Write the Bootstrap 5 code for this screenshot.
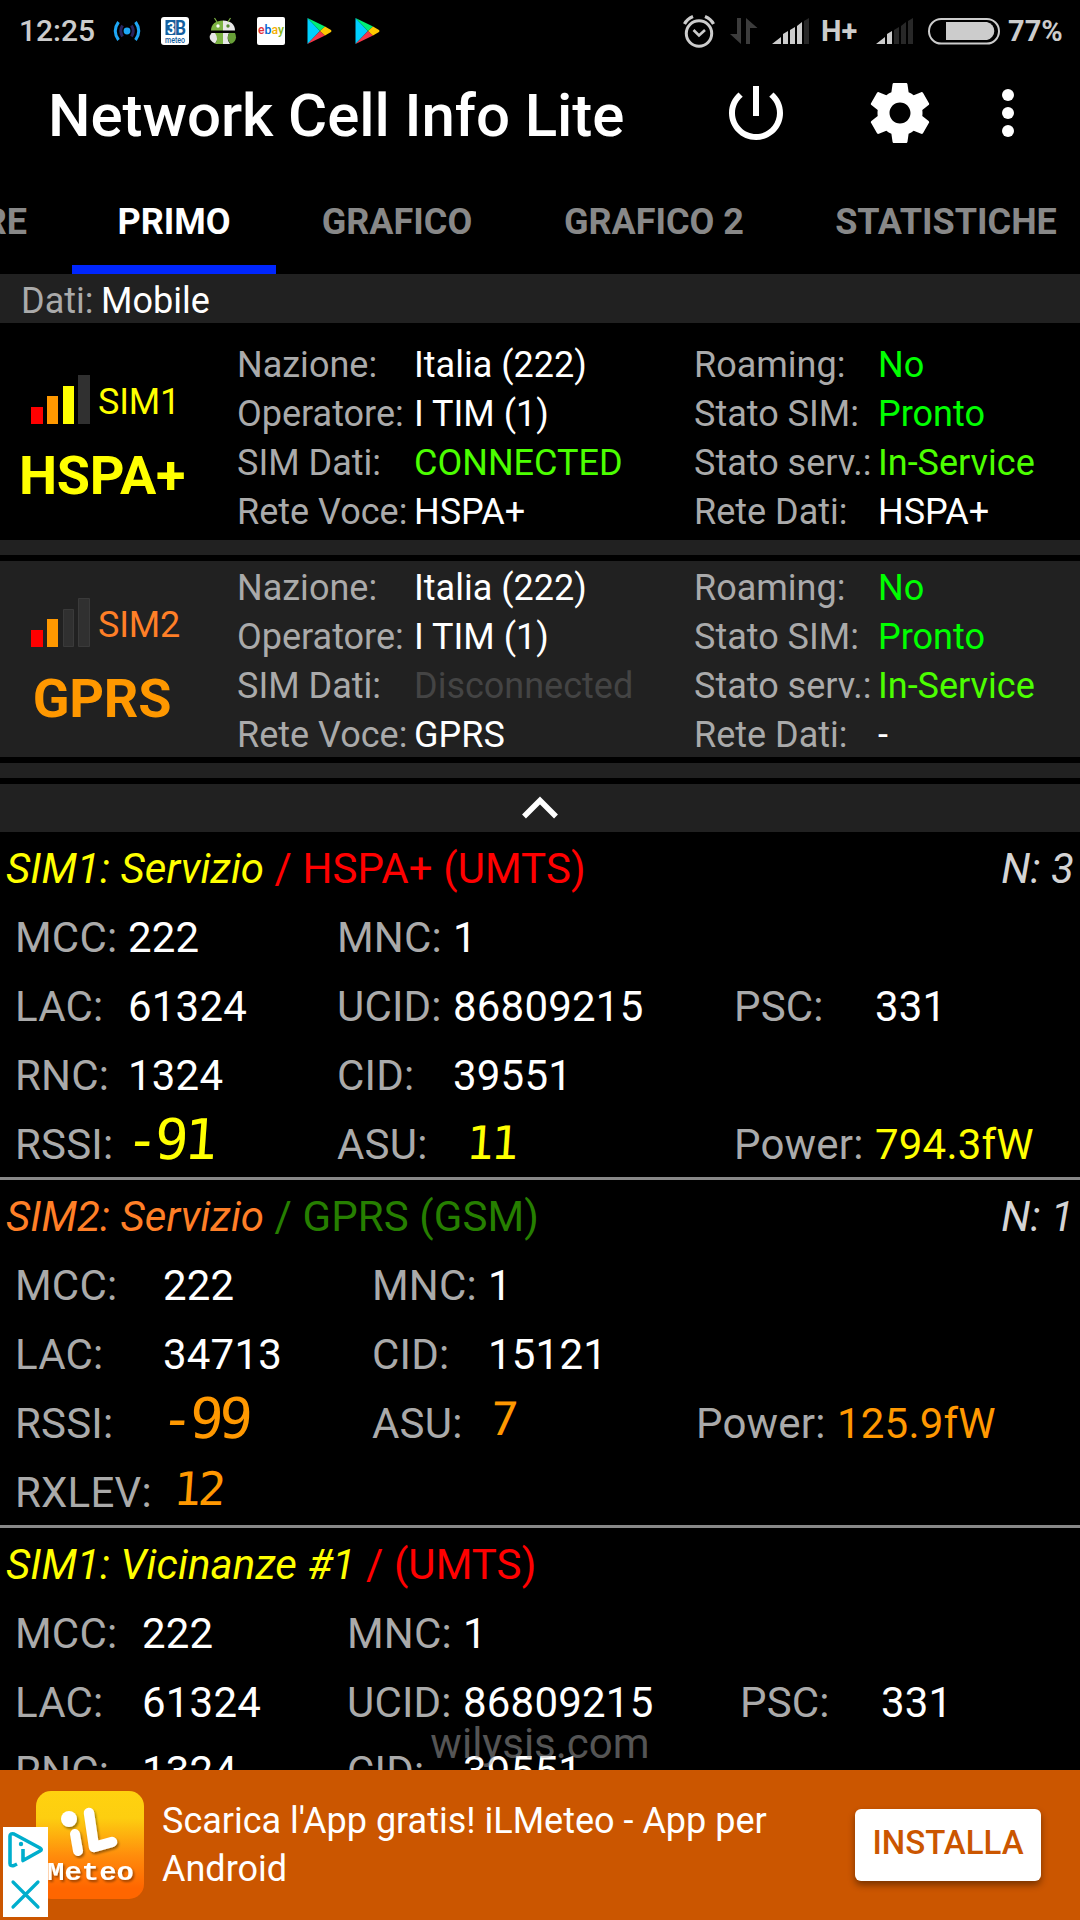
<!DOCTYPE html>
<html lang="it" data-bs-theme="dark">
<head>
<meta charset="utf-8">
<meta name="viewport" content="width=device-width, initial-scale=1">
<title>Network Cell Info Lite</title>
<link rel="stylesheet" href="https://cdn.jsdelivr.net/npm/bootstrap@5.3.0/dist/css/bootstrap.min.css">
<style>
  body { font-family: Roboto, "Liberation Sans", sans-serif; background: #000; color: #fff; margin: 0; }
  svg { display: block; flex: none; }
  .screen { width: 1080px; height: 1920px; overflow: hidden; background: #000; }
  /* status bar */
  .status { height: 61px; font-weight: 500; font-size: 30px; color: #ccc; line-height: 36px; }
  .status-left { display: grid; grid-template-columns: 94px repeat(6, 48px); padding-left: 19px; align-items: center; }
  .status-right { display: grid; grid-template-columns: 47px 42px 49px 55px 52px 80px 72px; align-items: center; }
  .strong-txt { font-weight: 700; font-size: 29px; }
  /* app bar */
  .appbar { height: 103px; padding-left: 48px; }
  .apptitle { font-size: 60px; font-weight: 500; line-height: 70px; width: 672px; padding-top: 20px; white-space: nowrap; letter-spacing: -.07px; }
  .gap-gear { margin-left: 72px; }
  .gap-dots { margin-left: 36px; }
  /* tabs */
  .tabbar { height: 110px; font-size: 36px; font-weight: 700; }
  .tabbar .tab-item { height: 110px; line-height: 42px; padding-top: 37px; text-align: center; white-space: nowrap; flex: none; color: #888; border-bottom: 9px solid transparent; }
  .tabbar .tab-item.on { color: #fff; border-bottom-color: #0026ff; }
  .t0 { width: 72px; padding-right: 45px; direction: rtl; }
  .t1 { width: 204px; } .t2 { width: 242px; } .t3 { width: 272px; } .t4 { width: 312px; }
  /* summary panels */
  .shade { background: #212121; }
  .ln { height: 49px; padding-top: 5px; line-height: 44.500px; font-size: 36px; white-space: nowrap; }
  .lbl { color: #aaa; }
  .sim-panel { display: grid; grid-template-columns: 237px 177px 280px 184px 1fr; }
  .sim-side { grid-row: 1 / span 4; grid-column: 1; padding-top: 37px; }
  .sim-name { font-size: 36px; line-height: 42px; padding-top: 6px; margin-left: 7px; letter-spacing: -.2px; }
  .net-name { font-size: 54px; font-weight: 700; line-height: 60px; width: 204px; text-align: center; margin-top: 21px; letter-spacing: -.3px; }
  .strip { height: 15px; }
  .chev { height: 48px; margin-top: 6px; }
  .yel { color: #ff0; } .ora { color: #ff9800; } .cor { color: #ff7f27; }
  .grn { color: #0f0; } .lime { color: #4cff00; } .dgrn { color: #267f00; } .rd { color: #f00; } .dim { color: #444; } .pale { color: #d4d4d4; }
  /* cell sections */
  .cellbox { font-size: 42px; border-bottom: 3px solid #888; }
  .cellbox > div { height: 69px; padding-top: 4px; line-height: 65px; white-space: nowrap; }
  .cellbox > .cell-head { padding-left: 6px; padding-right: 6px; white-space: pre; letter-spacing: .08px; }
  .kv { display: grid; padding-left: 15px; letter-spacing: .2px; }
  .k1 .kv { grid-template-columns: 113px 209px 116px 281px 141px 1fr; }
  .k2 .kv { grid-template-columns: 148px 209px 116px 208px 141px 1fr; }
  .k3 .kv { grid-template-columns: 127px 205px 116px 277px 141px 1fr; }
  .lcd { font-family: "DejaVu Sans Mono", monospace; transform: skewX(-4deg); transform-origin: 0 100%; }
  .lcd-lg { font-size: 56px; letter-spacing: -4.500px; margin-left: -5px; margin-top: -5px; }
  .lcd-sm { font-size: 46px; letter-spacing: -2px; margin-top: -1px; }
  .lcd-asu { padding-left: 11px; letter-spacing: -3px; }
  .lcd-up { margin-top: -4px; }
  .lcd-rx { padding-left: 8px; letter-spacing: -3px; margin-top: -3px; }
  .cells { height: 938px; overflow: hidden; position: relative; }
  .watermark { position: absolute; left: 0; right: 0; top: 887px; text-align: center; font-size: 42px; line-height: 50px; color: rgba(170,170,170,.5); }
  /* ad */
  .adbar { height: 150px; background: #cb5600; position: relative; padding-left: 36px; }
  .adtext { font-size: 36px; line-height: 48px; width: 693px; padding: 27px 0 0 18px; height: 150px; }
  .install, .install:hover { width: 186px; height: 72px; background: #fff; color: #cb5600; font-size: 33px; font-weight: 500; border-radius: 6px; line-height: 64px; text-align: center; box-shadow: 0 4px 7px rgba(0,0,0,.4); margin-left: 18px; margin-top: 39px; padding: 0 0 4px; border: 0; }
  .adicon { margin-top: 21px; }
  .adchoice { position: absolute; left: 3px; top: 57px; width: 45px; height: 90px; background: #fff; }
</style>
<script src="https://cdn.jsdelivr.net/npm/bootstrap@5.3.0/dist/js/bootstrap.bundle.min.js"></script>
</head>
<body>
<div class="screen d-flex flex-column">
  <header class="status d-flex justify-content-between">
    <div class="status-left">
      <span>12:25</span>
      <svg width="28" height="28" viewBox="0 0 28 28" fill="none" stroke-width="3"><circle cx="14" cy="14" r="3.4" fill="#1ea7f5"/><g stroke="#29235c"><path d="M9.500 8.500q-3.500 5.500 0 11M18.500 8.500q3.500 5.500 0 11"/></g><g stroke="#1ea7f5"><path d="M5.500 5q-6.500 9 0 18M22.500 5q6.500 9 0 18"/></g></svg>
      <svg width="28" height="28" viewBox="0 0 28 28"><rect width="28" height="28" rx="3" fill="#fff"/><rect x="4.500" y="3" width="10" height="15" fill="#1560a0"/><text x="6" y="16.500" font-size="16" font-weight="700" fill="#fff" textLength="8" lengthAdjust="spacingAndGlyphs">3</text><text x="14" y="17.500" font-size="20" font-weight="700" fill="#1560a0" textLength="11" lengthAdjust="spacingAndGlyphs">B</text><text x="4" y="26" font-size="9" font-weight="500" fill="#1560a0" textLength="20" lengthAdjust="spacingAndGlyphs">meteo</text></svg>
      <svg width="28" height="28" viewBox="0 0 28 28"><path d="M2 13.500C2 7 7 3.500 14 3.500V13.500z" fill="#7cb342"/><path d="M14 3.500c7 0 12 3.500 12 10H14z" fill="#e8e8e8"/><path d="M8 5L5.500 1M19 5l2.500-4" stroke="#7cb342" stroke-width="1.200"/><circle cx="9" cy="9" r="1.700" fill="#fff"/><circle cx="19" cy="9" r="1.700" fill="#558b2f"/><path d="M2.500 16H10q-1 7-4 10.500Q0 24 .7 19z" fill="#e8e8e8"/><path d="M6 16h8v11H6q4-5 0-11z" fill="#7cb342"/><path d="M14 16h6q-3 6 1 11h-7z" fill="#e8e8e8"/><path d="M20 16h6q3 7-3 10.500h-2q-4-5-1-10.500z" fill="#689f38"/></svg>
      <svg width="28" height="28" viewBox="0 0 28 28"><rect width="28" height="28" rx="2" fill="#fff"/><text x="1" y="17" font-size="13" font-weight="500" textLength="26" lengthAdjust="spacingAndGlyphs"><tspan fill="#e53238">e</tspan><tspan fill="#0064d2">b</tspan><tspan fill="#f5af02">a</tspan><tspan fill="#86b817">y</tspan></text></svg>
      <svg width="28" height="28" viewBox="0 0 28 28"><path d="M2.500 1v26L15 14z" fill="#00d0ff"/><path d="M2.500 1L20 9.500 15 14z" fill="#00f076"/><path d="M2.500 27L20 18.500 15 14z" fill="#f5384a"/><path d="M20 9.500l6 3.500q1 1 0 2l-6 3.500-5-4.500z" fill="#ffc900"/></svg>
      <svg width="28" height="28" viewBox="0 0 28 28"><path d="M2.500 1v26L15 14z" fill="#00d0ff"/><path d="M2.500 1L20 9.500 15 14z" fill="#00f076"/><path d="M2.500 27L20 18.500 15 14z" fill="#f5384a"/><path d="M20 9.500l6 3.500q1 1 0 2l-6 3.500-5-4.500z" fill="#ffc900"/></svg>
    </div>
    <div class="status-right">
      <svg width="32" height="34" viewBox="0 0 32 34" fill="none" stroke="#ccc"><circle cx="16" cy="19.500" r="12.700" stroke-width="3"/><path d="M10.500 16l5.500 5.500 6-5.500" stroke-width="2.600"/><path d="M1.500 10Q4 5 10 2.500M30.500 10Q28 5 22 2.500" stroke-width="3.200"/></svg>
      <svg width="28" height="28" viewBox="0 0 28 28" fill="#3c3c3c"><path d="M7 1h4v26L0 17h7zM16 27h4V11h7.500L16 1z"/></svg>
      <svg width="38" height="28" viewBox="0 0 38 28" fill="#ccc"><path d="M0 27l9-7v7zM11 17l5-3v13h-5zM18 13l5-3v17h-5zM25 9l5-4v22h-5z"/><path d="M32 4l5-3v26h-5z" fill="#282828"/></svg>
      <span class="strong-txt">H+</span>
      <svg width="38" height="28" viewBox="0 0 38 28" fill="#ccc"><path d="M0 27l9-7v7zM11 17l5-3v13h-5z"/><path d="M18 13l5-3v17h-5zM25 9l5-4v22h-5zM32 4l5-3v26h-5z" fill="#282828"/></svg>
      <svg width="74" height="28" viewBox="0 0 74 28"><rect x="1" y="2" width="70" height="24.500" rx="12.200" fill="none" stroke="#ccc" stroke-width="2"/><path d="M18 5h41a9.200 9.200 0 0 1 0 18H18z" fill="#ccc"/></svg>
      <span class="strong-txt">77%</span>
    </div>
  </header>

  <nav class="appbar d-flex align-items-start" aria-label="App">
    <div class="apptitle">Network Cell Info Lite</div>
    <svg class="mt-3" width="72" height="72" viewBox="0 0 24 24" fill="#fff"><path d="M13 3h-2v10h2V3zm4.830 2.170l-1.420 1.420C17.990 7.860 19 9.810 19 12c0 3.870-3.130 7-7 7s-7-3.130-7-7c0-2.190 1.010-4.140 2.580-5.420L6.170 5.170C4.230 6.820 3 9.260 3 12c0 4.970 4.030 9 9 9s9-4.030 9-9c0-2.740-1.230-5.180-3.170-6.830z"/></svg>
    <svg class="mt-3 gap-gear" width="72" height="72" viewBox="0 0 24 24" fill="#fff"><path d="M19.430 12.980c.04-.32.07-.64.07-.98s-.03-.66-.07-.98l2.110-1.650c.19-.15.24-.42.12-.64l-2-3.460c-.12-.22-.39-.3-.61-.22l-2.490 1c-.52-.4-1.080-.73-1.690-.98l-.38-2.650C14.460 2.180 14.250 2 14 2h-4c-.25 0-.46.18-.49.42l-.38 2.650c-.61.25-1.170.59-1.690.98l-2.490-1c-.23-.09-.49 0-.61.22l-2 3.460c-.13.22-.07.49.12.64l2.110 1.650c-.04.32-.07.65-.07.98s.03.66.07.98l-2.110 1.650c-.19.15-.24.42-.12.64l2 3.460c.12.22.39.3.61.22l2.490-1c.52.4 1.080.73 1.690.98l.38 2.650c.03.24.24.42.49.42h4c.25 0 .46-.18.49-.42l.38-2.650c.61-.25 1.170-.59 1.690-.98l2.490 1c.23.09.49 0 .61-.22l2-3.460c.12-.22.07-.49-.12-.64l-2.110-1.650zM12 15.500c-1.930 0-3.500-1.570-3.500-3.500s1.570-3.500 3.500-3.500 3.500 1.570 3.500 3.500-1.570 3.500-3.500 3.500z"/></svg>
    <svg class="mt-3 gap-dots" width="72" height="72" viewBox="0 0 72 72" fill="#fff"><circle cx="36" cy="18" r="6"/><circle cx="36" cy="36" r="6"/><circle cx="36" cy="54" r="6"/></svg>
  </nav>

  <div class="tabbar d-flex overflow-hidden">
    <div class="tab-item t0">RE</div>
    <div class="tab-item t1 on">PRIMO</div>
    <div class="tab-item t2">GRAFICO</div>
    <div class="tab-item t3">GRAFICO 2</div>
    <div class="tab-item t4">STATISTICHE</div>
  </div>

  <div class="shade ln d-flex" style="padding-left:21px"><span class="lbl" style="width:80px">Dati:</span><span>Mobile</span></div>

  <section class="sim-panel" style="padding:15px 0 6px">
    <div class="sim-side">
      <div class="d-flex" style="padding-left:31px">
        <svg width="60" height="50" viewBox="0 0 60 50"><path d="M0 32h12v17H0z" fill="red"/><path d="M16 21h11v28H16z" fill="#ff9800"/><path d="M32 11h11v38H32z" fill="#ff0"/><path d="M47 0h12v49H47z" fill="#303030"/></svg>
        <span class="sim-name yel">SIM1</span>
      </div>
      <div class="net-name yel">HSPA+</div>
    </div>
    <span class="ln lbl">Nazione:</span><span class="ln">Italia (222)</span><span class="ln lbl">Roaming:</span><span class="ln grn">No</span>
    <span class="ln lbl">Operatore:</span><span class="ln">I TIM (1)</span><span class="ln lbl">Stato SIM:</span><span class="ln grn">Pronto</span>
    <span class="ln lbl">SIM Dati:</span><span class="ln lime">CONNECTED</span><span class="ln lbl">Stato serv.:</span><span class="ln lime">In-Service</span>
    <span class="ln lbl">Rete Voce:</span><span class="ln">HSPA+</span><span class="ln lbl">Rete Dati:</span><span class="ln">HSPA+</span>
  </section>
  <div class="shade strip"></div>
  <section class="sim-panel shade" style="margin:6px 0">
    <div class="sim-side">
      <div class="d-flex" style="padding-left:31px">
        <svg width="60" height="50" viewBox="0 0 60 50"><path d="M0 32h12v17H0z" fill="red"/><path d="M16 21h11v28H16z" fill="#ff9800"/><g fill="#303030" stroke="#3a3a3a"><path d="M32.500 11.500h10v37h-10zM47.500.5h11v48h-11z"/></g></svg>
        <span class="sim-name cor">SIM2</span>
      </div>
      <div class="net-name ora">GPRS</div>
    </div>
    <span class="ln lbl">Nazione:</span><span class="ln">Italia (222)</span><span class="ln lbl">Roaming:</span><span class="ln grn">No</span>
    <span class="ln lbl">Operatore:</span><span class="ln">I TIM (1)</span><span class="ln lbl">Stato SIM:</span><span class="ln grn">Pronto</span>
    <span class="ln lbl">SIM Dati:</span><span class="ln dim">Disconnected</span><span class="ln lbl">Stato serv.:</span><span class="ln lime">In-Service</span>
    <span class="ln lbl">Rete Voce:</span><span class="ln">GPRS</span><span class="ln lbl">Rete Dati:</span><span class="ln">-</span>
  </section>
  <div class="shade strip"></div>
  <div class="shade chev d-flex justify-content-center align-items-center"><svg width="38" height="24" viewBox="0 0 38 24" fill="none" stroke="#fff" stroke-width="5.500"><path d="M3 20.500L19 4.500l16 16"/></svg></div>

  <main class="cells">
    <div class="watermark">wilysis.com</div>
    <section class="cellbox k1">
      <div class="cell-head d-flex"><i class="yel">SIM1: Servizio </i><span class="rd">/ HSPA+ (UMTS)</span><i class="ms-auto pale">N: 3</i></div>
      <div class="kv"><span class="lbl">MCC:</span><span>222</span><span class="lbl">MNC:</span><span>1</span></div>
      <div class="kv"><span class="lbl">LAC:</span><span>61324</span><span class="lbl">UCID:</span><span>86809215</span><span class="lbl">PSC:</span><span>331</span></div>
      <div class="kv"><span class="lbl">RNC:</span><span>1324</span><span class="lbl">CID:</span><span>39551</span></div>
      <div class="kv"><span class="lbl">RSSI:</span><span class="lcd lcd-lg yel">-91</span><span class="lbl">ASU:</span><span class="lcd lcd-sm lcd-asu yel">11</span><span class="lbl">Power:</span><span class="yel">794.3fW</span></div>
    </section>
    <section class="cellbox k2">
      <div class="cell-head d-flex"><i class="cor">SIM2: Servizio </i><span class="dgrn">/ GPRS (GSM)</span><i class="ms-auto pale">N: 1</i></div>
      <div class="kv"><span class="lbl">MCC:</span><span>222</span><span class="lbl">MNC:</span><span>1</span></div>
      <div class="kv"><span class="lbl">LAC:</span><span>34713</span><span class="lbl">CID:</span><span>15121</span></div>
      <div class="kv"><span class="lbl">RSSI:</span><span class="lcd lcd-lg ora">-99</span><span class="lbl">ASU:</span><span class="lcd lcd-sm lcd-up ora">7</span><span class="lbl">Power:</span><span class="ora">125.9fW</span></div>
      <div class="kv"><span class="lbl">RXLEV:</span><span class="lcd lcd-sm lcd-rx ora">12</span></div>
    </section>
    <section class="cellbox k3">
      <div class="cell-head d-flex"><i class="yel">SIM1: Vicinanze #1 </i><span class="rd">/ (UMTS)</span></div>
      <div class="kv"><span class="lbl">MCC:</span><span>222</span><span class="lbl">MNC:</span><span>1</span></div>
      <div class="kv"><span class="lbl">LAC:</span><span>61324</span><span class="lbl">UCID:</span><span>86809215</span><span class="lbl">PSC:</span><span>331</span></div>
      <div class="kv"><span class="lbl">RNC:</span><span>1324</span><span class="lbl">CID:</span><span>39551</span></div>
    </section>
  </main>

  <footer class="adbar d-flex align-items-start">
    <svg class="adicon" width="108" height="108" viewBox="0 0 108 108">
      <defs><linearGradient id="sun" x1="0" y1="0" x2="0" y2="1"><stop offset="0" stop-color="#ffd20f"/><stop offset=".25" stop-color="#fdce10"/><stop offset=".6" stop-color="#ff8c0c"/><stop offset=".9" stop-color="#ff6600"/></linearGradient>
      <filter id="soft" x="-20%" y="-20%" width="140%" height="140%"><feDropShadow dx="1.500" dy="2" stdDeviation="1" flood-opacity=".4"/></filter></defs>
      <rect width="108" height="108" rx="15" fill="url(#sun)"/>
      <g filter="url(#soft)" fill="none" stroke="#fff" stroke-linecap="round" stroke-linejoin="round"><circle cx="33" cy="28" r="8" fill="#fff" stroke="none"/><path d="M39 43l3 17" stroke-width="10"/><path d="M53 22l5 34 18-5" stroke-width="10.500"/></g>
      <text filter="url(#soft)" fill="#fff" x="11" y="89" font-family="Liberation Mono, monospace" font-size="26" font-weight="700" textLength="87" lengthAdjust="spacingAndGlyphs">Meteo</text>
    </svg>
    <div class="adtext">Scarica l'App gratis! iLMeteo - App per Android</div>
    <button class="install btn" type="button">INSTALLA</button>
    <div class="adchoice"><svg width="45" height="90" viewBox="0 0 45 90" fill="none" stroke="#00aecd" stroke-width="3.600"><path d="M14 37l-3 1.500q-4 1-4-2V9q0-3 4-2l26 14q2.500 1.500 0 3L20 33.500V22" stroke-linejoin="round"/><circle cx="18" cy="17" r="2.200" fill="#00aecd" stroke="none"/><path d="M10 55l25 25M35 55L10 80" stroke-width="3.200" stroke-linecap="round"/></svg></div>
  </footer>
</div>
</body>
</html>
